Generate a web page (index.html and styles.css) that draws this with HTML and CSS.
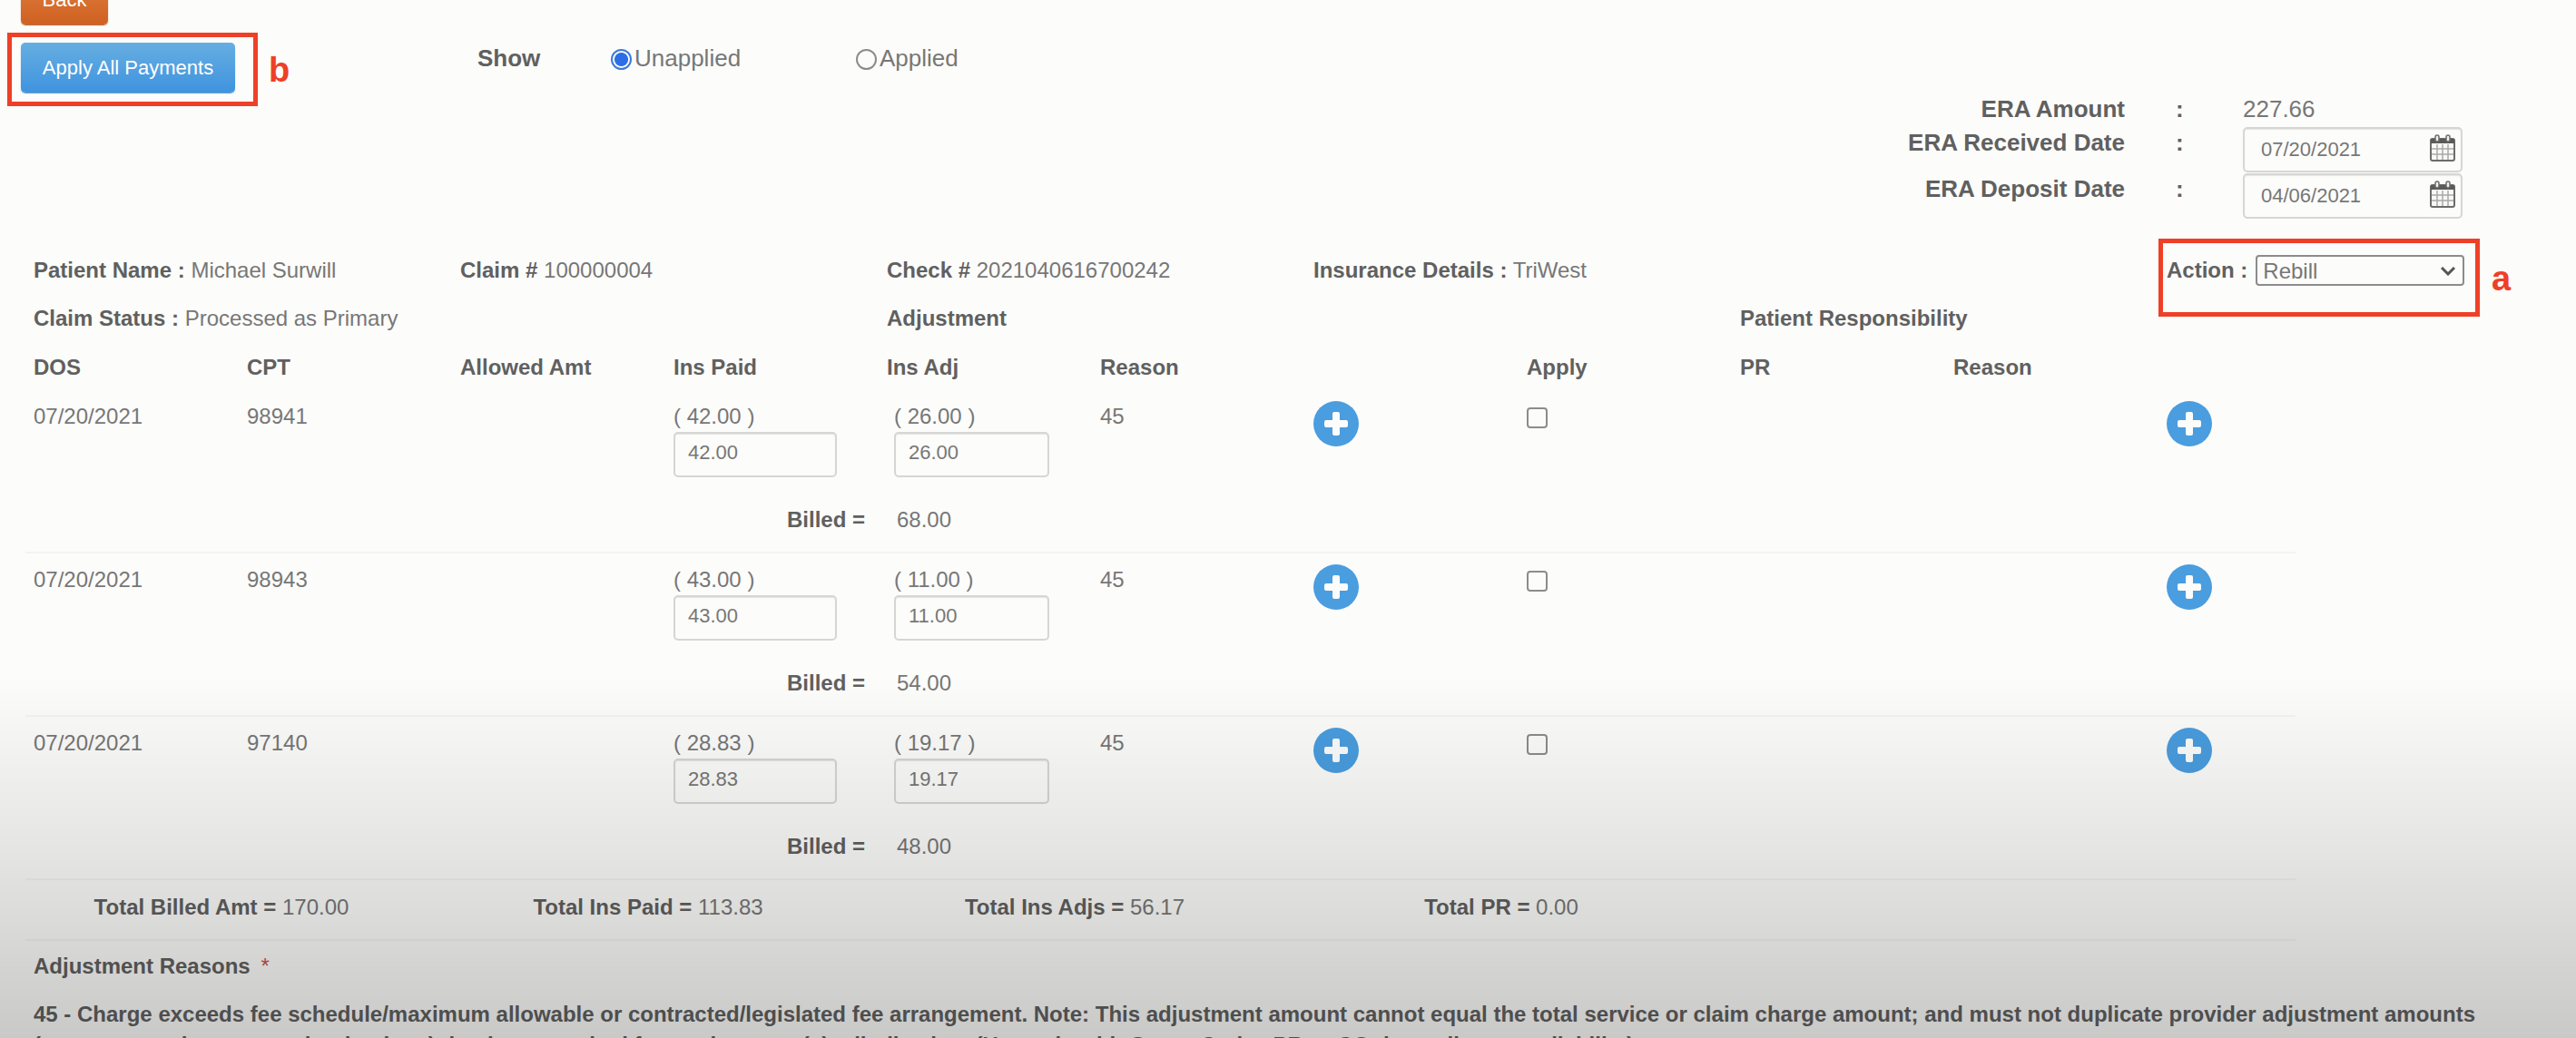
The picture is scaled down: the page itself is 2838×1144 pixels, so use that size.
FILE: index.html
```html
<!DOCTYPE html>
<html lang="en">
<head>
<meta charset="utf-8">
<title>ERA Payments</title>
<meta name="viewport" content="width=device-width, initial-scale=1">
<link rel="stylesheet" href="styles.css">
</head>
<body>
<svg class="sprite" aria-hidden="true">
  <symbol id="plus" viewBox="0 0 50 50">
    <circle cx="25" cy="25" r="25" fill="#4a9ddf"/>
    <path d="M23 12h4a2 2 0 0 1 2 2v7h7a2 2 0 0 1 2 2v4a2 2 0 0 1-2 2h-7v7a2 2 0 0 1-2 2h-4a2 2 0 0 1-2-2v-7h-7a2 2 0 0 1-2-2v-4a2 2 0 0 1 2-2h7v-7a2 2 0 0 1 2-2z" fill="#fcfcfa"/>
  </symbol>
  <symbol id="calendar" viewBox="0 0 28 30">
    <rect x="1" y="5" width="26" height="24" rx="2" fill="#f8f8f6" stroke="#6c6c6a" stroke-width="2"/>
    <path d="M1 5h26v5H1z" fill="#5a5a58"/>
    <path d="M8 11v17M14 11v17M20 11v17M2 16h24M2 22h24" stroke="#a9a9a7" stroke-width="1.5"/>
    <rect x="6" y="1" width="4" height="7" rx="2" fill="#f0f0ee" stroke="#6c6c6a" stroke-width="1.5"/>
    <rect x="18" y="1" width="4" height="7" rx="2" fill="#f0f0ee" stroke="#6c6c6a" stroke-width="1.5"/>
  </symbol>
</svg>

<header class="toolbar">
  <button class="btn btn-back" type="button">Back</button>
  <div class="toolbar-row">
    <div class="apply-all">
      <button class="btn btn-apply" type="button">Apply All Payments</button>
      <span class="callout callout-b"></span>
      <span class="callout-letter letter-b">b</span>
    </div>
    <div class="show" role="radiogroup" aria-labelledby="show-label">
      <b id="show-label">Show</b>
      <label class="radio"><input type="radio" name="show" checked>Unapplied</label>
      <label class="radio"><input type="radio" name="show">Applied</label>
    </div>
  </div>
</header>

<section class="era">
  <div class="era-row"><b>ERA Amount</b><b>:</b><span>227.66</span></div>
  <div class="era-row"><label for="received">ERA Received Date</label><b>:</b>
    <div class="date"><input id="received" type="text" value="07/20/2021"><svg><use href="#calendar"/></svg></div></div>
  <div class="era-row"><label for="deposit">ERA Deposit Date</label><b>:</b>
    <div class="date"><input id="deposit" type="text" value="04/06/2021"><svg><use href="#calendar"/></svg></div></div>
</section>

<main>
  <section class="claim">
    <div class="cols">
      <p class="span2"><b>Patient Name :</b> Michael Surwill</p>
      <p class="span2"><b>Claim #</b> 100000004</p>
      <p class="span2"><b>Check #</b> 2021040616700242</p>
      <p class="span4"><b>Insurance Details :</b> TriWest</p>
      <div class="span2 action">
        <label for="action">Action :</label>
        <div class="select"><select id="action"><option>Rebill</option><option>Settle</option></select>
          <svg viewBox="0 0 16 10"><path d="M1 1l7 7 7-7" fill="none" stroke="#555" stroke-width="3"/></svg></div>
        <span class="callout callout-a"></span>
        <span class="callout-letter letter-a">a</span>
      </div>
    </div>
    <div class="cols">
      <p class="span4"><b>Claim Status :</b> Processed as Primary</p>
      <p class="span4"><b>Adjustment</b></p>
      <p class="span4"><b>Patient Responsibility</b></p>
    </div>
  </section>

  <table class="lines">
    <thead>
      <tr class="cols"><th>DOS</th><th>CPT</th><th>Allowed Amt</th><th>Ins Paid</th><th>Ins Adj</th><th>Reason</th><th></th><th>Apply</th><th>PR</th><th>Reason</th><th></th></tr>
    </thead>
    <tbody>
      <tr class="cols">
        <td>07/20/2021</td><td>98941</td><td></td>
        <td class="paid"><span>( 42.00 )</span><input type="text" value="42.00" aria-label="Ins Paid"><b>Billed =</b></td>
        <td class="adj"><span>( 26.00 )</span><input type="text" value="26.00" aria-label="Ins Adj"><span class="billed">68.00</span></td>
        <td>45</td>
        <td><button class="add" type="button" aria-label="Add adjustment"><svg><use href="#plus"/></svg></button></td>
        <td><input class="tick" type="checkbox" aria-label="Apply"></td>
        <td></td><td></td>
        <td><button class="add" type="button" aria-label="Add patient responsibility"><svg><use href="#plus"/></svg></button></td>
      </tr>
      <tr class="cols">
        <td>07/20/2021</td><td>98943</td><td></td>
        <td class="paid"><span>( 43.00 )</span><input type="text" value="43.00" aria-label="Ins Paid"><b>Billed =</b></td>
        <td class="adj"><span>( 11.00 )</span><input type="text" value="11.00" aria-label="Ins Adj"><span class="billed">54.00</span></td>
        <td>45</td>
        <td><button class="add" type="button" aria-label="Add adjustment"><svg><use href="#plus"/></svg></button></td>
        <td><input class="tick" type="checkbox" aria-label="Apply"></td>
        <td></td><td></td>
        <td><button class="add" type="button" aria-label="Add patient responsibility"><svg><use href="#plus"/></svg></button></td>
      </tr>
      <tr class="cols">
        <td>07/20/2021</td><td>97140</td><td></td>
        <td class="paid"><span>( 28.83 )</span><input type="text" value="28.83" aria-label="Ins Paid"><b>Billed =</b></td>
        <td class="adj"><span>( 19.17 )</span><input type="text" value="19.17" aria-label="Ins Adj"><span class="billed">48.00</span></td>
        <td>45</td>
        <td><button class="add" type="button" aria-label="Add adjustment"><svg><use href="#plus"/></svg></button></td>
        <td><input class="tick" type="checkbox" aria-label="Apply"></td>
        <td></td><td></td>
        <td><button class="add" type="button" aria-label="Add patient responsibility"><svg><use href="#plus"/></svg></button></td>
      </tr>
    </tbody>
  </table>

  <section class="totals">
    <p><b>Total Billed Amt =</b> 170.00</p>
    <p><b>Total Ins Paid =</b> 113.83</p>
    <p><b>Total Ins Adjs =</b> 56.17</p>
    <p><b>Total PR =</b> 0.00</p>
  </section>

  <section class="reasons">
    <h2>Adjustment Reasons <span>*</span></h2>
    <p>45 - Charge exceeds fee schedule/maximum allowable or contracted/legislated fee arrangement. Note: This adjustment amount cannot equal the total service or claim charge amount; and must not duplicate provider adjustment amounts (payments and contractual reductions) that have resulted from prior payer(s) adjudication. (Use only with Group Codes PR or CO depending upon liability)</p>
  </section>
</main>
<div class="shade"></div>
</body>
</html>
```
FILE: styles.css
```css
* { box-sizing: border-box; }

body {
  margin: 0;
  height: 100vh;
  overflow: hidden;
  background: #fcfcfa;
  color: #777;
  font: 24px/34px "Liberation Sans", Arial, sans-serif;
}

p, h2 { margin: 0; font-size: inherit; }
b, th, h2, label { color: #606060; font-weight: bold; }
input, select, button { font-family: inherit; color: inherit; }
.sprite { position: absolute; width: 0; height: 0; }

/* Toolbar */
.toolbar { padding-left: 23px; }

.btn {
  display: block;
  height: 55px;
  border: 0;
  border-radius: 5px;
  color: #fff;
  font-size: 22px;
}
.btn-back {
  width: 96px;
  margin-top: -28px;
  background: linear-gradient(#e08040, #cf6122);
  box-shadow: 0 1px 1px #b5602c;
}
.btn-apply {
  width: 236px;
  background: linear-gradient(#66aee2, #3f93de);
  box-shadow: 0 1px 1px #5a9bd0;
}
.toolbar-row { display: flex; align-items: flex-start; margin-top: 20px; }
.apply-all { position: relative; }
.show { display: flex; margin-left: 267px; font-size: 26px; }
.radio { display: flex; align-items: flex-start; gap: 3px; color: #777; font-weight: normal; }
.show b { width: 147px; }
.show .radio { width: 270px; }
.radio input {
  appearance: none;
  width: 23px;
  height: 23px;
  margin: 7px 0 0;
  border: 2px solid #8c8c8c;
  border-radius: 50%;
}
.radio input:checked {
  border-color: #3a7ad9;
  background: radial-gradient(circle, #2b6fe6 7px, transparent 8px);
}

/* Red markers drawn over the controls they point at */
.callout { position: absolute; border: 5px solid #ee4027; pointer-events: none; }
.callout-b { left: -15px; top: -11px; width: 276px; height: 81px; }
.callout-a { left: -9px; top: -18px; width: 354px; height: 86px; }
.callout-letter { position: absolute; color: #ee4027; font-size: 38px; font-weight: bold; }
.letter-b { left: 273px; top: 13px; }
.letter-a { left: 358px; top: 9px; }

/* ERA amounts and dates */
.era {
  display: flex;
  flex-direction: column;
  align-items: flex-end;
  padding: 1px 125px 0 0;
  font-size: 26px;
}
.era-row { display: grid; grid-template-columns: 260px 18px 242px; column-gap: 56px; min-height: 37px; }
.era-row > :first-child { text-align: right; white-space: nowrap; }
.era-row + .era-row { min-height: 51px; }
.date { position: relative; }
.date input { width: 100%; height: 50px; padding: 0 18px; }
.date svg { position: absolute; right: 8px; top: 8px; width: 28px; height: 30px; }

input[type="text"] {
  display: block;
  border: 2px solid #d6d6d5;
  border-radius: 5px;
  background: transparent;
  box-shadow: inset 0 1px 1px #e4e4e2;
  font-size: 22px;
}

/* Eleven even columns and a slightly narrower last one */
.cols { display: grid; grid-template-columns: repeat(11, minmax(0, 235fr)) minmax(0, 216fr); }
.span2 { grid-column: span 2; }
.span4 { grid-column: span 4; }

.claim { display: grid; gap: 19px; padding: 39px 0 20px 37px; }
.claim p { white-space: nowrap; }
.action { position: relative; display: flex; align-items: flex-start; gap: 9px; }
.select { position: relative; width: 230px; }
.select select {
  appearance: none;
  display: block;
  width: 100%;
  height: 34px;
  padding: 0 6px;
  border: 2px solid #8c8c8c;
  border-radius: 4px;
  background: transparent;
  font-size: 24px;
}
.select svg { position: absolute; right: 10px; top: 13px; width: 16px; height: 10px; pointer-events: none; }

/* Service lines */
.lines { display: block; padding-left: 28px; }
.lines thead, .lines tbody { display: block; }
.lines tr { padding-left: 9px; }
.lines th, .lines td { padding: 0; text-align: left; }
.lines thead tr { height: 42px; }
.lines tbody tr { padding-top: 12px; padding-bottom: 20px; }
.lines tbody tr, .totals { background: linear-gradient(#f3f3f1, #f3f3f1) left bottom / 89% 2px no-repeat; }

.paid span, .adj span { display: block; }
.paid input, .adj input { height: 50px; margin-bottom: 30px; padding: 0 14px 4px; }
.paid input { width: 180px; }
.paid b { display: block; margin-right: 24px; text-align: right; }
.adj input { width: 171px; }
.lines .adj { padding-left: 8px; }
.adj .billed { padding-left: 3px; }

.add { display: block; width: 50px; height: 50px; padding: 0; border: 0; background: none; }
.add svg { display: block; width: 50px; height: 50px; }
.tick {
  appearance: none;
  display: block;
  width: 23px;
  height: 23px;
  margin: 7px 0 0;
  border: 2px solid #8c8c8c;
  border-radius: 4px;
}

.totals {
  display: grid;
  grid-template-columns: repeat(4, 470fr) 930fr;
  margin-left: 28px;
  padding: 13px 0 20px;
  text-align: center;
}
.totals p { margin: 0 19px 0 -19px; }

.reasons { padding: 11px 37px 0; }
.reasons h2 { margin-bottom: 19px; }
.reasons h2 span { margin-left: 5px; color: #d05050; font-weight: normal; }
.reasons p { color: #606060; font-weight: bold; }

/* Darkening towards the bottom of the window */
.shade {
  position: fixed;
  inset: auto 0 0;
  height: 400px;
  background: linear-gradient(transparent, rgba(0, 0, 0, .09) 48%, rgba(0, 0, 0, .2));
  pointer-events: none;
}
```
